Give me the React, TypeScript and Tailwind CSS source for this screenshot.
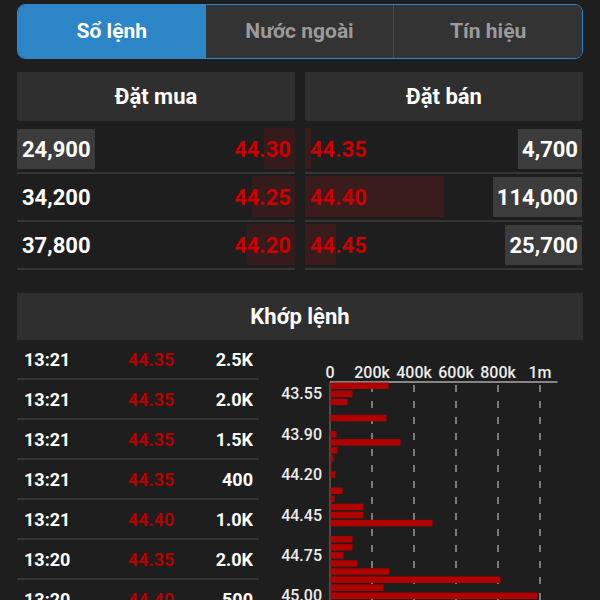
import React from "react";

const font = { fontFamily: "Roboto, 'Noto Sans', 'Liberation Sans', sans-serif" };

const bids = [
  { qty: "24,900", price: "44.30", bar: 31, badge: true },
  { qty: "34,200", price: "44.25", bar: 43, badge: false },
  { qty: "37,800", price: "44.20", bar: 48, badge: false },
];
const asks = [
  { qty: "4,700", price: "44.35", bar: 6 },
  { qty: "114,000", price: "44.40", bar: 139 },
  { qty: "25,700", price: "44.45", bar: 31 },
];
const trades = [
  ["13:21", "44.35", "2.5K"],
  ["13:21", "44.35", "2.0K"],
  ["13:21", "44.35", "1.5K"],
  ["13:21", "44.35", "400"],
  ["13:21", "44.40", "1.0K"],
  ["13:20", "44.35", "2.0K"],
  ["13:20", "44.40", "500"],
];
const bars = [58, 22, 17, 0, 56, 0, 6, 70, 7, 3, 1, 5, 0, 12, 4, 33, 33, 102, 0, 22, 22, 13, 27, 59, 170, 53, 207];
const yLabels = [
  [1, "43.55"],
  [6, "43.90"],
  [11, "44.20"],
  [16, "44.45"],
  [21, "44.75"],
  [26, "45.00"],
] as const;

function Chart() {
  const ox = 259;
  const oy = 340;
  const x0 = 330 - ox;
  const grid = [372, 414, 456, 498, 540];
  const ticks = [
    [330, "0"],
    [372, "200k"],
    [414, "400k"],
    [456, "600k"],
    [498, "800k"],
    [540, "1m"],
  ] as const;
  const slotY = (k: number) => 382.5 + 8.08 * k - oy;
  return (
    <svg width={324} height={260} className="block overflow-visible">
      {ticks.map(([x, t]) => (
        <text
          key={t}
          x={x - ox}
          y={378 - oy}
          textAnchor="middle"
          fill="#ececec"
          fontSize={16}
          fontWeight={500}
          fontFamily="Roboto, sans-serif"
        >
          {t}
        </text>
      ))}
      {grid.map((x) => (
        <line key={x} x1={x - ox} x2={x - ox} y1={385 - oy} y2={262} stroke="#9a9a9a" strokeWidth={1.5} strokeDasharray="7 9" />
      ))}
      <line x1={x0} x2={x0} y1={382 - oy} y2={262} stroke="#777" strokeWidth={1} />
      <line x1={x0} x2={557.5 - ox} y1={382 - oy} y2={382 - oy} stroke="#aaa" strokeWidth={1.5} />
      {bars.map((w, k) =>
        w > 0 ? <rect key={k} x={x0 + 0.5} y={slotY(k)} width={w} height={6.5} fill="#b00000" /> : null
      )}
      {yLabels.map(([k, t]) => (
        <text
          key={t}
          x={322 - ox}
          y={slotY(k) + 3.25 + 5.5}
          textAnchor="end"
          fill="#ececec"
          fontSize={16}
          fontWeight={500}
          fontFamily="Roboto, sans-serif"
        >
          {t}
        </text>
      ))}
    </svg>
  );
}

export default function App() {
  return (
    <div className="w-[600px] h-[600px] overflow-hidden bg-[#1e1e1e] px-[17px] pt-[4px]" style={font}>
      {/* Tabs */}
      <div className="flex h-[55px] rounded-[8px] border-[1.5px] border-[#2d86c5] overflow-hidden">
        <div className="flex-1 flex items-center justify-center bg-[#2b85c6] text-white text-[21px] font-bold">Sổ lệnh</div>
        <div className="flex-1 flex items-center justify-center bg-[#333333] text-[#9b9b9b] text-[21px] font-bold">Nước ngoài</div>
        <div className="flex-1 flex items-center justify-center bg-[#333333] text-[#9b9b9b] text-[21px] font-bold border-l border-[#4a4a4a]">Tín hiệu</div>
      </div>

      {/* Order book */}
      <div className="mt-[13px] grid grid-cols-2 gap-[10px]">
        <div>
          <div className="h-[49px] bg-[#2f2f2f] flex items-center justify-center text-white text-[22px] font-bold">Đặt mua</div>
          <div className="mt-[5px]">
            {bids.map((r) => (
              <div key={r.price} className="relative h-[48px] border-b-2 border-[#343434] flex items-center justify-between">
                <span
                  className={`h-[40px] flex items-center pl-[5px] pr-[4px] text-white text-[22px] font-bold ${r.badge ? "bg-[#3c3c3c]" : ""}`}
                >
                  {r.qty}
                </span>
                <div className="absolute right-0 top-[2px] bottom-[3px] bg-[#351b1b]" style={{ width: r.bar }} />
                <span className="relative pr-[4px] text-[#cc0000] text-[22px] font-bold">{r.price}</span>
              </div>
            ))}
          </div>
        </div>
        <div>
          <div className="h-[49px] bg-[#2f2f2f] flex items-center justify-center text-white text-[22px] font-bold">Đặt bán</div>
          <div className="mt-[5px]">
            {asks.map((r) => (
              <div key={r.price} className="relative h-[48px] border-b-2 border-[#343434] flex items-center justify-between">
                <div className="absolute left-0 top-[2px] bottom-[3px] bg-[#3a1c1c]" style={{ width: r.bar }} />
                <span className="relative pl-[5px] text-[#cc0000] text-[22px] font-bold">{r.price}</span>
                <span className="h-[40px] mr-[1px] flex items-center px-[4px] bg-[#3c3c3c] text-white text-[22px] font-bold">
                  {r.qty}
                </span>
              </div>
            ))}
          </div>
        </div>
      </div>

      {/* Khớp lệnh */}
      <div className="mt-[23px] h-[47px] bg-[#2f2f2f] flex items-center justify-center text-white text-[22px] font-bold">Khớp lệnh</div>
      <div className="flex">
        <div className="w-[242px] shrink-0">
          {trades.map((t, i) => (
            <div key={i} className="h-[40px] border-b-2 border-[#343434] flex items-center pl-[7px] pr-[6px] pt-[1px] text-[18px]">
              <span className="w-[104px] text-white font-bold">{t[0]}</span>
              <span className="text-[#b80000] font-semibold">{t[1]}</span>
              <span className="flex-1 text-right text-white font-bold">{t[2]}</span>
            </div>
          ))}
        </div>
        <div className="flex-1">
          <Chart />
        </div>
      </div>
    </div>
  );
}
